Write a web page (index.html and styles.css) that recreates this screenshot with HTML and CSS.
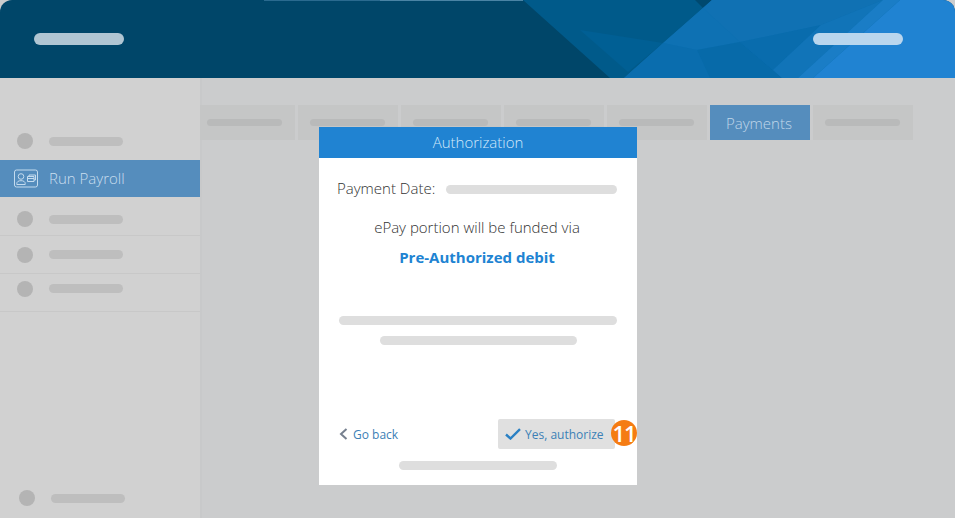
FILE: index.html
```html
<!DOCTYPE html>
<html lang="en">
<head>
    <meta charset="UTF-8">
    <meta name="viewport" content="width=device-width, initial-scale=1.0">
    <title>Authorization</title>
    <link rel="stylesheet" href="styles.css">
</head>
<body>
    <header class="topbar">
        <svg class="topbar-art" width="955" height="78" viewBox="0 0 955 78" aria-hidden="true">
            <rect x="264" y="0" width="116" height="1" fill="#2a6a8f"/>
            <rect x="380" y="0" width="143" height="1" fill="#4a84a5"/>
            <polygon points="523,0 713,0 624,78 610,78" fill="#005a8a"/>
            <polygon points="580,30 663,43 628,72" fill="#005f94"/>
            <polygon points="695,0 713,0 703,8" fill="#00496f"/>
            <polygon points="712,0 900,0 813,78 624,78" fill="#0c6fb0"/>
            <polygon points="712,0 883,0 821,25 740,42 703,8" fill="#1071b3"/>
            <polygon points="703,8 740,42 697,50 663,43" fill="#0e71b3"/>
            <polygon points="663,43 697,50 710,78 624,78" fill="#0a6dae"/>
            <polygon points="697,50 740,42 773,70 782,78 710,78" fill="#076aa9"/>
            <polygon points="740,42 821,25 773,70" fill="#096cad"/>
            <polygon points="773,70 821,25 883,0 798,78 782,78" fill="#1174b8"/>
            <polygon points="883,0 900,0 813,78 798,78" fill="#1a7dc6"/>
        </svg>
        <span class="pill pill-left"></span>
        <span class="pill pill-right"></span>
    </header>

    <div class="layout">
        <aside class="sidebar">
            <ul class="menu">
                <li class="menu-item first"><i class="dot"></i><i class="bar"></i></li>
                <li class="menu-item active">
                    <svg class="card-icon" width="24" height="19" viewBox="0 0 24 19" fill="none" stroke="#c5dcef" stroke-width="1" aria-hidden="true">
                        <rect x="0.5" y="1" width="23" height="17" rx="2"/>
                        <circle cx="7" cy="7.5" r="2.8"/>
                        <path d="M2.8 15.5v-1c0-1.8 1.6-2.8 4.2-2.8s4.2 1 4.2 2.8v1z"/>
                        <path d="M13.5 7.5h6.500v5h-6.500zM13.500 9.500h6.500M15 7.500v-1.500h6.500v5h-1.500"/>
                    </svg>
                    <span>Run Payroll</span>
                </li>
                <li class="menu-item ruled low"><i class="dot"></i><i class="bar"></i></li>
                <li class="menu-item ruled"><i class="dot"></i><i class="bar"></i></li>
                <li class="menu-item ruled high"><i class="dot"></i><i class="bar"></i></li>
            </ul>
            <div class="sidebar-foot"><i class="dot"></i><i class="bar"></i></div>
        </aside>

        <main class="content">
            <nav class="tabs">
                <div class="tab tab-first"><i class="bar"></i></div>
                <div class="tab"><i class="bar"></i></div>
                <div class="tab"><i class="bar"></i></div>
                <div class="tab"><i class="bar"></i></div>
                <div class="tab"><i class="bar"></i></div>
                <div class="tab active">Payments</div>
                <div class="tab"><i class="bar"></i></div>
            </nav>
        </main>
    </div>

    <section class="modal">
        <h2 class="modal-title">Authorization</h2>
        <div class="modal-body">
            <div class="date-row">
                <span>Payment Date:</span>
                <i class="line line-grow"></i>
            </div>
            <p class="funded">ePay portion will be funded via</p>
            <p class="method">Pre-Authorized debit</p>
            <i class="line line-full"></i>
            <i class="line line-short"></i>
            <div class="actions">
                <a class="back" href="#">
                    <svg width="9" height="12" viewBox="0 0 9 12" fill="none" stroke="#76808f" stroke-width="2" aria-hidden="true"><path d="M7.500 1 2 6l5.500 5"/></svg>
                    Go back
                </a>
                <a class="confirm" href="#">
                    <svg width="16" height="12" viewBox="0 0 16 12" fill="none" stroke="#2a80c4" stroke-width="2.400" aria-hidden="true"><path d="M1 6.500 5.500 10.500 15 1.200"/></svg>
                    Yes, authorize
                    <b class="badge">11</b>
                </a>
            </div>
            <i class="line line-foot"></i>
        </div>
    </section>
</body>
</html>
```

FILE: styles.css
```css
* {
    box-sizing: border-box;
}

html,
body {
    height: 100%;
}

body {
    margin: 0;
    background-color: #cbcccd;
    font-family: "Open Sans", Arial, sans-serif;
    color: #444;
    overflow: hidden;
}

i {
    display: block;
}

/* header */
.topbar {
    position: relative;
    height: 78px;
    background-color: #004669;
    border-radius: 12px 12px 0 0;
    overflow: hidden;
    display: flex;
    justify-content: space-between;
    align-items: center;
    padding: 0 52px 0 34px;
}

.topbar-art {
    position: absolute;
    top: 0;
    left: 0;
}

.topbar::before {
    content: "";
    position: absolute;
    top: 0;
    right: 0;
    bottom: 0;
    width: 142px;
    background-color: #2083d2;
}

.pill {
    position: relative;
    display: block;
    width: 90px;
    height: 12px;
    border-radius: 6px;
}

.pill-left {
    background-color: #b0c6d3;
}

.pill-right {
    background-color: #b9d6ee;
}

/* page below the header */
.layout {
    display: flex;
    height: 440px;
}

.sidebar {
    width: 202px;
    background-color: #d1d1d1;
    border-right: 2px solid #c8c9ca;
    display: flex;
    flex-direction: column;
    justify-content: space-between;
    padding-top: 44px;
}

.menu {
    list-style: none;
    margin: 0;
    padding: 0;
}

.menu-item {
    display: flex;
    align-items: center;
    gap: 16px;
    padding-left: 17px;
    height: 38px;
}

.menu-item.ruled {
    border-bottom: 1px solid #c8c8c8;
}

.menu-item.low {
    height: 39px;
    padding-top: 6px;
}

.menu-item.high {
    padding-bottom: 8px;
}

.menu-item.active {
    height: 37px;
    gap: 11px;
    padding: 0 0 0 14px;
    background-color: #558dbd;
    color: #c9deef;
    font-size: 15px;
    font-weight: 300;
}

.menu-item.active span {
    margin-top: -2px;
}

.dot {
    width: 16px;
    height: 16px;
    border-radius: 50%;
    background-color: #b4b4b4;
}

.bar {
    width: 74px;
    height: 9px;
    border-radius: 5px;
    background-color: #bebebe;
}

.sidebar-foot {
    display: flex;
    align-items: center;
    gap: 16px;
    padding: 0 0 12px 19px;
}

/* tabs */
.content {
    flex: 1;
    padding-top: 27px;
}

.tabs {
    display: flex;
    gap: 3px;
    margin-left: -2px;
}

.tab {
    width: 100px;
    height: 35px;
    padding-left: 12px;
    background-color: #c5c6c6;
    display: flex;
    align-items: center;
}

.tab-first {
    width: 95px;
    padding-left: 7px;
}

.tab .bar {
    width: 75px;
    height: 7px;
    border-radius: 4px;
    background-color: #b9baba;
}

.tab.active {
    padding-left: 16px;
    background-color: #558dbd;
    color: #c0d7ea;
    font-size: 15px;
    font-weight: 300;
}

/* dialog */
.modal {
    position: absolute;
    top: 127px;
    left: 319px;
    width: 318px;
    height: 358px;
    background-color: #fff;
    display: flex;
    flex-direction: column;
}

.modal-title {
    margin: 0;
    height: 31px;
    line-height: 31px;
    background-color: #2083d2;
    color: #d3e9fa;
    font-size: 15px;
    font-weight: 300;
    text-align: center;
}

.modal-body {
    flex: 1;
    padding: 21px 20px 0 18px;
    display: flex;
    flex-direction: column;
}

.date-row {
    display: flex;
    align-items: center;
    gap: 11px;
    height: 20px;
    font-size: 15px;
    font-weight: 300;
    color: #333;
}

.date-row span {
    margin-top: -2px;
}

.line {
    height: 9px;
    border-radius: 5px;
    background-color: #dedede;
}

.line-grow {
    flex: 1;
}

.funded {
    margin: 18px 0 0;
    line-height: 20px;
    font-size: 15px;
    font-weight: 300;
    color: #333;
    text-align: center;
}

.method {
    margin: 10px 0 0;
    line-height: 20px;
    font-size: 15px;
    font-weight: 700;
    color: #2083d2;
    text-align: center;
}

.line-full {
    margin: 49px 0 0 2px;
}

.line-short {
    width: 197px;
    margin: 11px 0 0 43px;
}

.actions {
    display: flex;
    justify-content: space-between;
    align-items: center;
    height: 30px;
    margin-top: 74px;
    margin-right: 2px;
    font-size: 12px;
}

.actions a {
    color: #3c80b6;
    text-decoration: none;
    display: flex;
    align-items: center;
}

.back {
    gap: 5px;
    margin-left: 2px;
}

.confirm {
    position: relative;
    width: 117px;
    height: 30px;
    gap: 4px;
    padding-left: 7px;
    background-color: #e0e0e0;
    border-radius: 2px;
}

.badge {
    position: absolute;
    top: 1px;
    left: 113px;
    width: 26px;
    height: 26px;
    border-radius: 50%;
    background-color: #f57c13;
    color: #fff;
    font-size: 22px;
    font-weight: 600;
    line-height: 26px;
    text-align: center;
    letter-spacing: -1px;
}

.line-foot {
    width: 158px;
    margin: 12px 0 0 62px;
}
```
